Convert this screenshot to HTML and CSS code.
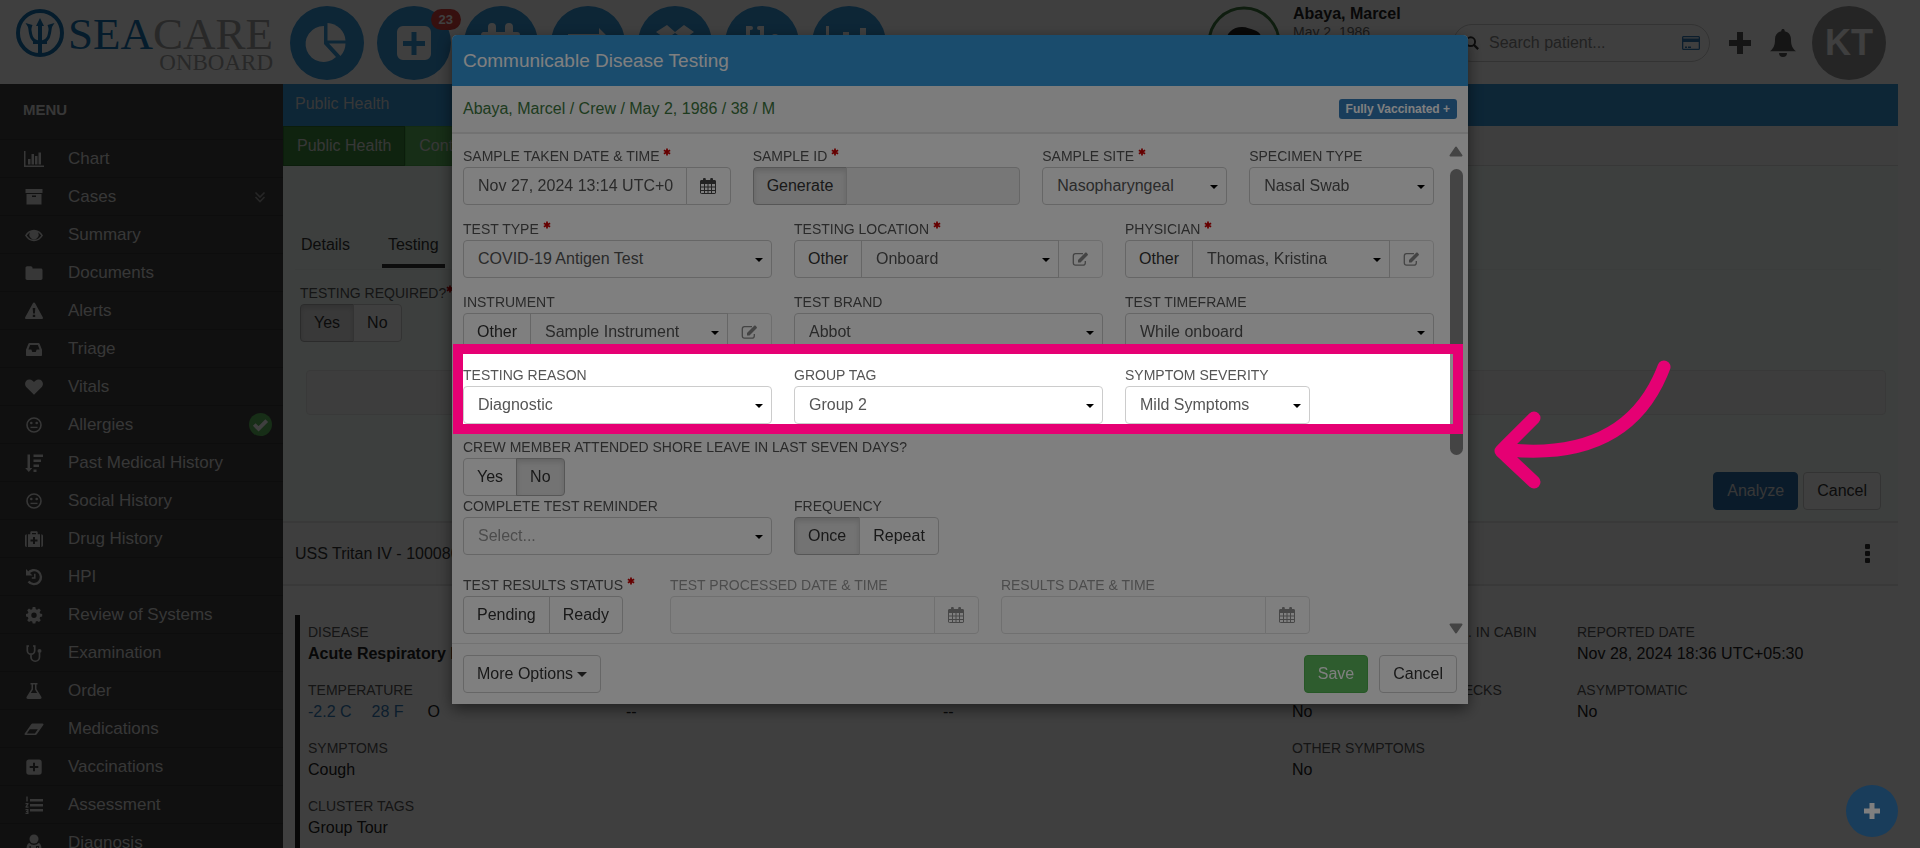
FILE: index.html
```html
<!DOCTYPE html>
<html lang="en">
<head>
  <meta charset="UTF-8">
  <meta name="viewport" content="width=device-width, initial-scale=1.0">
  <title>Communicable Disease Testing - SeaCare Onboard</title>
  <link rel="stylesheet" href="styles.css">
</head>
<body>

<!-- Icon set -->
<svg class="icon-defs" aria-hidden="true">
  <symbol id="i-chart" viewBox="0 0 20 20"><path d="M0 2h1.5v14.5H20V18H0zM4 10h2.500v5.500H4zM7.500 5H10v10.500H7.500zM11 7h2.500v8.500H11zM14.500 3.500H17v12h-2.500z"/></symbol>
  <symbol id="i-archive" viewBox="0 0 20 20"><path d="M1.500 2h17v4h-17z"/><path fill-rule="evenodd" d="M2.500 7h15v10.500h-15zM8 8.500v1.500h4V8.500z"/></symbol>
  <symbol id="i-eye" viewBox="0 0 20 20"><path fill-rule="evenodd" d="M1 10.500C3 7 6.300 4.800 10 4.800s7 2.200 9 5.700c-2 3.500-5.300 5.700-9 5.700s-7-2.200-9-5.700zm1.800 0c1.700 2.700 4.300 4.300 7.200 4.300s5.500-1.600 7.200-4.300c-.8-1.400-2-2.500-3.300-3.300a4.600 4.600 0 1 1-7.800 0c-1.300.8-2.500 1.900-3.300 3.300z"/></symbol>
  <symbol id="i-folder" viewBox="0 0 20 20"><path d="M1.500 5c0-1 .7-1.700 1.700-1.700h3.600c1 0 1.700.7 1.700 1.700v.6h8.300c1 0 1.700.7 1.700 1.700v8c0 1-.7 1.700-1.700 1.700H3.200c-1 0-1.700-.7-1.700-1.700z"/></symbol>
  <symbol id="i-warning" viewBox="0 0 20 20"><path fill-rule="evenodd" d="M10 1.500c.5 0 .9.300 1.100.7l7.700 14c.5.900-.1 1.800-1.100 1.800H2.300c-1 0-1.600-.9-1.100-1.800l7.700-14c.2-.4.600-.7 1.100-.7zM8.700 7l.4 5.500h1.800l.4-5.500zM8.800 13.700v2.200h2.400v-2.200z"/></symbol>
  <symbol id="i-inbox" viewBox="0 0 20 20"><path fill-rule="evenodd" d="M5.500 4h9c.5 0 .9.300 1.100.7l2.400 6V16c0 .6-.4 1-1 1H3c-.6 0-1-.4-1-1v-5.300l2.400-6c.2-.4.600-.7 1.100-.7zm.6 2L4.400 10.500h2.900l1 2.500h3.400l1-2.500h2.900L13.900 6z"/></symbol>
  <symbol id="i-heart" viewBox="0 0 20 20"><path d="M10 17.800L2.700 10.600C-.5 7.300 1.300 2.400 5.500 2.400c2.200 0 3.600 1.500 4.500 2.600.9-1.100 2.300-2.600 4.500-2.600 4.200 0 6 4.900 2.800 8.200z"/></symbol>
  <symbol id="i-meh" viewBox="0 0 20 20"><circle cx="10" cy="10" r="7" fill="none" stroke="currentColor" stroke-width="1.600"/><circle cx="7.300" cy="8" r="1.300"/><circle cx="12.700" cy="8" r="1.300"/><path d="M6.500 11.700h7v1.400h-7z"/></symbol>
  <symbol id="i-sort" viewBox="0 0 20 20"><path d="M3.500 1.500h2.500V15h2.300l-3.500 4-3.600-4h2.300zM9.500 1.500H19v2.500H9.500zM9.500 6.500h7.500V9H9.500zM9.500 11.500h5.500V14H9.500zM9.500 16.500h3V19h-3z"/></symbol>
  <symbol id="i-medkit" viewBox="0 0 20 20"><path fill-rule="evenodd" d="M1 7c0-1 .7-1.800 1.700-1.800V18C1.700 18 1 17.200 1 16.200zM19 7c0-1-.7-1.800-1.700-1.800V18c1 0 1.700-.8 1.700-1.800zM4 5.200h2.300V3.500c0-.8.600-1.300 1.300-1.300h4.800c.7 0 1.300.5 1.300 1.300v1.700H16V18H4zM8 4v1.200h4V4zM9 8v2.500H6.500v2H9V15h2v-2.500h2.500v-2H11V8z"/></symbol>
  <symbol id="i-history" viewBox="0 0 20 20"><path d="M4 6.500A7 7 0 1 1 4.500 14.500" fill="none" stroke="currentColor" stroke-width="2.400"/><path d="M2 2v6.500h6.500z"/><path d="M10.800 6.800v4.200H7.800" fill="none" stroke="currentColor" stroke-width="1.500"/></symbol>
  <symbol id="i-gear" viewBox="0 0 20 20"><path fill-rule="evenodd" d="M8.700 2h2.600l.5 2.200 1.300.5 1.900-1.200 1.800 1.800-1.200 1.900.5 1.300 2.100.5v2.600l-2.100.5-.5 1.300 1.200 1.900-1.800 1.800-1.900-1.200-1.300.5-.5 2.100H8.700l-.5-2.100-1.300-.5L5 17.100l-1.800-1.800 1.200-1.900-.5-1.300L2 11.600V9l1.900-.5.5-1.300-1.200-1.900L5 3.500l1.900 1.200 1.300-.5zM10 7.600a2.700 2.700 0 1 0 0 5.400 2.700 2.700 0 0 0 0-5.400z"/></symbol>
  <symbol id="i-steth" viewBox="0 0 20 20"><path d="M5 3H3.300v4.500a3.700 3.700 0 0 0 7.400 0V3H9M7 11.500V14a4 4 0 0 0 8.500 0v-4" fill="none" stroke="currentColor" stroke-width="1.700"/><circle cx="15.500" cy="8" r="2"/></symbol>
  <symbol id="i-flask" viewBox="0 0 20 20"><path fill-rule="evenodd" d="M6.500 2h7v1.500h-1V8l4.800 7.800c.7 1.200.1 2.200-1.300 2.200H4c-1.400 0-2-1-1.300-2.200L7.500 8V3.500h-1zM9 3.500v5L6.800 12h6.400L11 8.500v-5z"/></symbol>
  <symbol id="i-eraser" viewBox="0 0 20 20"><path fill-rule="evenodd" d="M8.500 4.500h10c.9 0 1.300.8.800 1.500l-6.500 9.300c-.3.400-.8.700-1.300.7h-10c-.9 0-1.300-.8-.8-1.500l6.500-9.300c.3-.4.800-.7 1.300-.7zM2.900 14.500h8l2.900-4.200h-8z"/></symbol>
  <symbol id="i-plus-square" viewBox="0 0 20 20"><path fill-rule="evenodd" d="M5 2.500h10a2.700 2.700 0 0 1 2.700 2.700v9.800a2.700 2.700 0 0 1-2.700 2.700H5A2.700 2.700 0 0 1 2.300 15V5.200A2.700 2.700 0 0 1 5 2.500zM9 5.800V9H5.700v2H9v3.300h2V11h3.300V9H11V5.800z"/></symbol>
  <symbol id="i-list" viewBox="0 0 20 20"><path d="M6 4h13v2.500H6zM6 9h13v2.500H6zM6 14h13v2.500H6zM2.300 1.500h1.400v5H2.300zM1.500 8h3v1.200L3 11.500h1.500v1.200h-3v-1.200L3 9.200H1.500zM1.500 14h3v5h-3v-1.200h1.700v-.8H2v-1h1.200v-.8H1.500z"/></symbol>
  <symbol id="i-doctor" viewBox="0 0 20 20"><circle cx="10" cy="6" r="4.500"/><path fill-rule="evenodd" d="M5.500 10c1 1.200 2.700 2 4.500 2s3.500-.8 4.500-2c2.200.5 3 3 3 6v3h-15v-3c0-3 .8-5.500 3-6zM5.500 13v3h1.300v-3zM12 13v4h1v-3h1v3h1v-4z"/></symbol>
  <symbol id="i-calendar" viewBox="0 0 16 16"><path fill-rule="evenodd" d="M1.500 2H3V1a1 1 0 0 1 1-1h.8a1 1 0 0 1 1 1v1h4.400V1a1 1 0 0 1 1-1h.8a1 1 0 0 1 1 1v1h1.500c.8 0 1.500.6 1.500 1.400v11.200c0 .8-.7 1.400-1.500 1.400h-12C.6 16 0 15.400 0 14.600V3.400C0 2.600.7 2 1.500 2zM1 6v2.500h3V6zM5 6v2.500h2.500V6zM8.500 6v2.500H11V6zM12 6v2.500h3V6zM1 9.500V12h3V9.500zM5 9.500V12h2.500V9.500zM8.500 9.500V12H11V9.500zM12 9.500V12h3V9.500zM1 13v2h3v-2zM5 13v2h2.500v-2zM8.500 13v2H11v-2zM12 13v2h3v-2z"/></symbol>
  <symbol id="i-edit" viewBox="0 0 16 14"><path d="M10.500 1.700H3A2.300 2.300 0 0 0 .8 4v7A2.300 2.300 0 0 0 3 13.200h7.500A2.300 2.300 0 0 0 12.800 11V9" fill="none" stroke="currentColor" stroke-width="1.300"/><path d="M5.500 10.500V8l7.200-7.200c.4-.4 1-.4 1.400 0l1.100 1.100c.4.400.4 1 0 1.400L8 10.500z"/></symbol>
  <symbol id="i-star" viewBox="0 0 10 10"><path d="M5 .5v9M1.100 2.700l7.800 4.600M8.900 2.700L1.100 7.300" stroke="currentColor" stroke-width="2.200" fill="none"/></symbol>
</svg>

<header class="topbar">
  <a class="logo" href="#" aria-label="SeaCare Onboard">
    <svg class="logo-mark" viewBox="0 0 48 48">
      <circle cx="24" cy="24" r="22" fill="none" stroke="currentColor" stroke-width="4"/>
      <path d="M24 14v32" fill="none" stroke="currentColor" stroke-width="4"/>
      <path d="M13.500 17c1 8 1 16 10.500 16s9.500-8 10.500-16" fill="none" stroke="currentColor" stroke-width="3"/>
      <path d="M24 9l4 8h-8zM9.500 14l7 2-2 6zM38.500 14l-7 2 2 6zM17 32h14v3H17z"/>
    </svg>
    <span class="logo-text">
      <span class="logo-name"><b>SEA</b>CARE</span>
      <span class="logo-sub">ONBOARD</span>
    </span>
  </a>
  <nav class="quick-nav">
    <a href="#" aria-label="Dashboard"><svg viewBox="0 0 74 74"><path d="M34 20v18l12 13a18 18 0 1 1-12-31z"/><path d="M37.500 17a19 19 0 0 1 18 17.500h-18z"/><path d="M39 37.500h16.500a19 19 0 0 1-5 12.500z"/></svg></a>
    <a href="#" aria-label="Patients"><svg viewBox="0 0 74 74"><path fill-rule="evenodd" d="M26 20h22a6 6 0 0 1 6 6v22a6 6 0 0 1-6 6H26a6 6 0 0 1-6-6V26a6 6 0 0 1 6-6zM34.500 26v9H26v5h8.500v9h5v-9H48v-5h-8.500v-9z"/></svg><span class="quick-badge">23</span></a>
    <a href="#" aria-label="Calendar"><svg viewBox="0 0 74 74"><path d="M19 26h5v-5a4 4 0 0 1 8 0v5h9v-5a4 4 0 0 1 8 0v5h4a3 3 0 0 1 3 3v26H17V29a3 3 0 0 1 2-3z"/></svg></a>
    <a href="#" aria-label="Transfer"><svg viewBox="0 0 74 74"><path d="M17 28h31v-6l9 9-9 9v-6H17z"/></svg></a>
    <a href="#" aria-label="Inventory"><svg viewBox="0 0 74 74"><path d="M29 19l8 7 9-7 10 7-10 7-9-6-9 6-10-7zM22 36l15 8 15-8v12l-15 8-15-8z"/></svg></a>
    <a href="#" aria-label="Examination"><svg viewBox="0 0 74 74"><path d="M26 22h-3v14a7 7 0 0 0 14 0V22h-3M30 44v4c0 10 20 10 20 0V36" fill="none" stroke="#fff" stroke-width="4" stroke-linecap="round"/><circle cx="50" cy="33" r="5"/></svg></a>
    <a href="#" aria-label="Reports"><svg viewBox="0 0 74 74"><path d="M14 20h3v33h42v3H14zM22 38h5v12h-5zM31 26h6v24h-6zM40 34h5v16h-5zM48 22h6v28h-6z"/></svg></a>
  </nav>
  <div class="patient">
    <svg class="patient-photo" viewBox="0 0 74 74"><circle cx="37" cy="37" r="35" fill="#eee" stroke="#3c763d" stroke-width="3"/><path d="M19 38c-1-11 7-17 16-17 5 0 8 2 12 3 7 2 9 8 8 16z" fill="#222"/></svg>
    <div class="patient-text">
      <strong>Abaya, Marcel</strong>
      <span>May 2, 1986</span>
    </div>
  </div>
  <div class="search">
    <svg class="search-icon" viewBox="0 0 16 16"><circle cx="6.500" cy="6.500" r="5" fill="none" stroke="currentColor" stroke-width="2.200"/><path d="M10 10l5 5" stroke="currentColor" stroke-width="2.600"/></svg>
    <input type="text" aria-label="Search patient" placeholder="Search patient...">
    <svg class="search-card" viewBox="0 0 18 14"><path fill-rule="evenodd" d="M1.500 0h15c.8 0 1.500.7 1.500 1.500v11c0 .8-.7 1.500-1.500 1.500h-15C.7 14 0 13.300 0 12.500v-11C0 .7.700 0 1.500 0zM1.300 1.300v1.200h15.400V1.300zM1.300 6v6.700h15.400V6zM3 10.500h2V12H3zM6 10.500h3V12H6z"/></svg>
  </div>
  <button class="icon-btn" aria-label="Add"><svg width="22" height="22" viewBox="0 0 22 22"><path d="M8 0h6v8h8v6h-8v8H8v-8H0V8h8z"/></svg></button>
  <button class="icon-btn" aria-label="Notifications"><svg width="26" height="28" viewBox="0 0 26 28"><path d="M13 0c1 0 1.700.7 1.700 1.700v.5c4 .8 6.300 4 6.300 8 0 6.500 1.500 9 5 12H0c3.500-3 5-5.500 5-12 0-4 2.300-7.200 6.300-8v-.5C11.300.700 12 0 13 0zM9 24h8a4 4 0 0 1-8 0z"/></svg></button>
  <button class="user-avatar">KT</button>
</header>

<div class="layout">
  <nav class="sidebar">
    <h2>MENU</h2>
    <ul>
      <li><a href="#"><svg><use href="#i-chart"/></svg>Chart</a></li>
      <li><a href="#"><svg><use href="#i-archive"/></svg>Cases</a><svg class="side-chevron" viewBox="0 0 12 12"><path d="M1.500 1.500L6 6l4.500-4.500M1.500 6L6 10.500 10.500 6" fill="none" stroke="currentColor" stroke-width="1.600"/></svg></li>
      <li><a href="#"><svg><use href="#i-eye"/></svg>Summary</a></li>
      <li><a href="#"><svg><use href="#i-folder"/></svg>Documents</a></li>
      <li><a href="#"><svg><use href="#i-warning"/></svg>Alerts</a></li>
      <li><a href="#"><svg><use href="#i-inbox"/></svg>Triage</a></li>
      <li><a href="#"><svg><use href="#i-heart"/></svg>Vitals</a></li>
      <li><a href="#"><svg><use href="#i-meh"/></svg>Allergies</a><svg class="side-check" viewBox="0 0 24 24"><circle cx="12" cy="12" r="12" fill="#5cb85c"/><path d="M5.500 12l4.500 4.500L18.500 8" fill="none" stroke="#fff" stroke-width="4"/></svg></li>
      <li><a href="#"><svg><use href="#i-sort"/></svg>Past Medical History</a></li>
      <li><a href="#"><svg><use href="#i-meh"/></svg>Social History</a></li>
      <li><a href="#"><svg><use href="#i-medkit"/></svg>Drug History</a></li>
      <li><a href="#"><svg><use href="#i-history"/></svg>HPI</a></li>
      <li><a href="#"><svg><use href="#i-gear"/></svg>Review of Systems</a></li>
      <li><a href="#"><svg><use href="#i-steth"/></svg>Examination</a></li>
      <li><a href="#"><svg><use href="#i-flask"/></svg>Order</a></li>
      <li><a href="#"><svg><use href="#i-eraser"/></svg>Medications</a></li>
      <li><a href="#"><svg><use href="#i-plus-square"/></svg>Vaccinations</a></li>
      <li><a href="#"><svg><use href="#i-list"/></svg>Assessment</a></li>
      <li><a href="#"><svg><use href="#i-doctor"/></svg>Diagnosis</a></li>
    </ul>
  </nav>

  <main class="content">
    <h1 class="page-title">Public Health</h1>
    <div class="section-tabs">
      <button class="active">Public Health</button>
      <button>Contact Tracing</button>
    </div>
    <section class="case-panel">
      <div class="case-tabs">
        <a href="#">Details</a>
        <a href="#" class="active">Testing</a>
      </div>
      <div class="case-required">
        <span class="label">TESTING REQUIRED?<svg class="req"><use href="#i-star"/></svg></span>
        <div class="btn-group">
          <button class="btn active">Yes</button>
          <button class="btn">No</button>
        </div>
      </div>
      <div class="case-box"></div>
      <div class="case-actions">
        <button class="btn btn-primary">Analyze</button>
        <button class="btn">Cancel</button>
      </div>
    </section>
    <div class="vessel-bar">
      <span>USS Tritan IV - 1000801</span>
      <button class="kebab" aria-label="More"><i></i><i></i><i></i></button>
    </div>
    <section class="case-summary">
      <dl>
        <div class="c1"><dt>DISEASE</dt><dd><strong>Acute Respiratory Illness</strong></dd></div>
        <div class="c4"><dt>CABIN NO. AND TOTAL NO. IN CABIN</dt><dd>--</dd></div>
        <div class="c5"><dt>REPORTED DATE</dt><dd>Nov 28, 2024 18:36 UTC+05:30</dd></div>
        <div class="c1"><dt>TEMPERATURE</dt><dd class="temps"><a href="#">-2.2 C</a><a href="#">28 F</a><span>O</span></dd></div>
        <div class="c2"><dt>PULSE</dt><dd>--</dd></div>
        <div class="c3"><dt>RESPIRATORY RATE</dt><dd>--</dd></div>
        <div class="c4"><dt>DAILY TEMPERATURE CHECKS</dt><dd>No</dd></div>
        <div class="c5"><dt>ASYMPTOMATIC</dt><dd>No</dd></div>
        <div class="c1"><dt>SYMPTOMS</dt><dd>Cough</dd></div>
        <div class="c4"><dt>OTHER SYMPTOMS</dt><dd>No</dd></div>
        <div class="c1"><dt>CLUSTER TAGS</dt><dd>Group Tour</dd></div>
      </dl>
    </section>
  </main>
</div>

<div class="backdrop"></div>
<button class="fab" aria-label="New"><svg width="18" height="18" viewBox="0 0 18 18"><path d="M6.500 1h5v5.500H17v5h-5.500V17h-5v-5.500H1v-5h5.500z"/></svg></button>

<div class="modal" role="dialog" aria-labelledby="modalTitle">
  <div class="modal-header"><h2 id="modalTitle">Communicable Disease Testing</h2></div>
  <div class="modal-patient">
    <span>Abaya, Marcel / Crew / May 2, 1986 / 38 / M</span>
    <button class="vax-badge">Fully Vaccinated +</button>
  </div>
  <div class="modal-body">
    <form class="test-form">
      <div class="row">
        <div class="field w7">
          <label for="taken">SAMPLE TAKEN DATE &amp; TIME <svg class="req"><use href="#i-star"/></svg></label>
          <div class="input-group">
            <input class="control" id="taken" type="text" value="Nov 27, 2024 13:14 UTC+05:30">
            <button type="button" class="addon" aria-label="Pick date"><svg class="cal"><use href="#i-calendar"/></svg></button>
          </div>
        </div>
        <div class="field w7">
          <label for="sampleId">SAMPLE ID <svg class="req"><use href="#i-star"/></svg></label>
          <div class="input-group">
            <button type="button" class="btn active">Generate</button>
            <input class="control" id="sampleId" type="text" disabled>
          </div>
        </div>
        <div class="field w5">
          <label for="site">SAMPLE SITE <svg class="req"><use href="#i-star"/></svg></label>
          <div class="select"><select class="control" id="site"><option>Nasopharyngeal</option></select></div>
        </div>
        <div class="field w5">
          <label for="specimen">SPECIMEN TYPE</label>
          <div class="select"><select class="control" id="specimen"><option>Nasal Swab</option></select></div>
        </div>
      </div>

      <div class="row">
        <div class="field w8">
          <label for="testType">TEST TYPE <svg class="req"><use href="#i-star"/></svg></label>
          <div class="select"><select class="control" id="testType"><option>COVID-19 Antigen Test</option></select></div>
        </div>
        <div class="field w8">
          <label for="location">TESTING LOCATION <svg class="req"><use href="#i-star"/></svg></label>
          <div class="input-group">
            <button type="button" class="btn">Other</button>
            <div class="select"><select class="control" id="location"><option>Onboard</option></select></div>
            <button type="button" class="addon muted" aria-label="Edit location"><svg class="edit"><use href="#i-edit"/></svg></button>
          </div>
        </div>
        <div class="field w8">
          <label for="physician">PHYSICIAN <svg class="req"><use href="#i-star"/></svg></label>
          <div class="input-group">
            <button type="button" class="btn">Other</button>
            <div class="select"><select class="control" id="physician"><option>Thomas, Kristina</option></select></div>
            <button type="button" class="addon muted" aria-label="Edit physician"><svg class="edit"><use href="#i-edit"/></svg></button>
          </div>
        </div>
      </div>

      <div class="row">
        <div class="field w8">
          <label for="instrument">INSTRUMENT</label>
          <div class="input-group">
            <button type="button" class="btn">Other</button>
            <div class="select"><select class="control" id="instrument"><option>Sample Instrument</option></select></div>
            <button type="button" class="addon muted" aria-label="Edit instrument"><svg class="edit"><use href="#i-edit"/></svg></button>
          </div>
        </div>
        <div class="field w8">
          <label for="brand">TEST BRAND</label>
          <div class="select"><select class="control" id="brand"><option>Abbot</option></select></div>
        </div>
        <div class="field w8">
          <label for="timeframe">TEST TIMEFRAME</label>
          <div class="select"><select class="control" id="timeframe"><option>While onboard</option></select></div>
        </div>
      </div>

      <div class="row row-tour">
        <div class="field w8">
          <label for="reason">TESTING REASON</label>
          <div class="select"><select class="control" id="reason"><option>Diagnostic</option></select></div>
        </div>
        <div class="field w8">
          <label for="groupTag">GROUP TAG</label>
          <div class="select"><select class="control" id="groupTag"><option>Group 2</option></select></div>
        </div>
        <div class="field w5">
          <label for="severity">SYMPTOM SEVERITY</label>
          <div class="select"><select class="control" id="severity"><option>Mild Symptoms</option></select></div>
        </div>
        <!-- Tour step: everything outside this frame is dimmed -->
        <div class="spotlight">
          <svg class="spotlight-arrow" viewBox="0 0 190 140">
            <path d="M177 17C152 83 97 107 22 100M47 68L14 101l33 31" fill="none" stroke="#e50073" stroke-width="13" stroke-linecap="round" stroke-linejoin="round"/>
          </svg>
        </div>
      </div>

      <div class="row row-tight">
        <div class="field w24">
          <span class="label">CREW MEMBER ATTENDED SHORE LEAVE IN LAST SEVEN DAYS?</span>
          <div class="btn-group">
            <button type="button" class="btn">Yes</button>
            <button type="button" class="btn active">No</button>
          </div>
        </div>
      </div>

      <div class="row row-wide">
        <div class="field w8">
          <label for="reminder">COMPLETE TEST REMINDER</label>
          <div class="select"><select class="control placeholder" id="reminder"><option>Select...</option></select></div>
        </div>
        <div class="field w8">
          <span class="label">FREQUENCY</span>
          <div class="btn-group">
            <button type="button" class="btn active">Once</button>
            <button type="button" class="btn">Repeat</button>
          </div>
        </div>
      </div>

      <div class="row row-tight">
        <div class="field w5">
          <span class="label">TEST RESULTS STATUS <svg class="req"><use href="#i-star"/></svg></span>
          <div class="btn-group">
            <button type="button" class="btn">Pending</button>
            <button type="button" class="btn">Ready</button>
          </div>
        </div>
        <div class="field w8 faded">
          <label for="processed">TEST PROCESSED DATE &amp; TIME</label>
          <div class="input-group">
            <input class="control" id="processed" type="text">
            <button type="button" class="addon" aria-label="Pick processed date"><svg class="cal"><use href="#i-calendar"/></svg></button>
          </div>
        </div>
        <div class="field w8 faded">
          <label for="results">RESULTS DATE &amp; TIME</label>
          <div class="input-group">
            <input class="control" id="results" type="text">
            <button type="button" class="addon" aria-label="Pick results date"><svg class="cal"><use href="#i-calendar"/></svg></button>
          </div>
        </div>
      </div>
    </form>
    <div class="scrollbar">
      <svg viewBox="0 0 14 11"><path d="M7 1.500L12.500 9.500h-11z" stroke="currentColor" stroke-width="2" stroke-linejoin="round"/></svg>
      <div class="scroll-track"><div class="scroll-thumb"></div></div>
      <svg viewBox="0 0 14 11"><path d="M7 9.500L1.500 1.500h11z" stroke="currentColor" stroke-width="2" stroke-linejoin="round"/></svg>
    </div>
  </div>
  <div class="modal-footer">
    <button class="btn">More Options <span class="caret"></span></button>
    <div class="modal-actions">
      <button class="btn btn-success">Save</button>
      <button class="btn">Cancel</button>
    </div>
  </div>
</div>

</body>
</html>
```
FILE: styles.css
```css
* {
  margin: 0;
  padding: 0;
  box-sizing: border-box;
}

body {
  font-family: "Liberation Sans", Arial, sans-serif;
  font-size: 16px;
  line-height: 22px;
  color: #333;
  background-color: #fff;
  height: 100vh;
  overflow: hidden;
}

button,
input,
select {
  font: inherit;
  color: inherit;
}

a {
  color: inherit;
  text-decoration: none;
}

svg {
  fill: currentColor;
}

.icon-defs {
  position: absolute;
  width: 0;
  height: 0;
}

/* Top bar */
.topbar {
  height: 84px;
  display: flex;
  align-items: center;
  padding: 1px 34px 0 16px;
}

.logo {
  display: flex;
  align-self: flex-start;
  align-items: flex-start;
  gap: 4px;
  width: 274px;
  padding-top: 8px;
  color: #1673b1;
}

.logo-mark {
  width: 48px;
  height: 48px;
}

.logo-text {
  display: flex;
  flex-direction: column;
  align-items: flex-end;
  padding-top: 4px;
  font-family: "Liberation Serif", "Times New Roman", serif;
  color: #a3a3a3;
}

.logo-name {
  font-size: 45px;
  line-height: 42px;
}

.logo-name b {
  font-weight: normal;
  color: #1673b1;
}

.logo-sub {
  font-size: 23px;
  line-height: 15px;
}

.quick-nav {
  display: flex;
  gap: 13px;
}

.quick-nav a {
  position: relative;
  width: 74px;
  height: 74px;
  border-radius: 50%;
  background-color: #3498db;
  color: #fff;
}

.quick-badge {
  position: absolute;
  top: 3px;
  right: -10px;
  padding: 0 8px;
  border-radius: 11px;
  background-color: #d9403c;
  font-size: 13px;
  font-weight: bold;
  line-height: 21px;
}

.patient {
  display: flex;
  gap: 12px;
  margin-left: auto;
  width: 246px;
}

.patient-photo {
  width: 74px;
  height: 74px;
}

.patient-text {
  display: flex;
  flex-direction: column;
  line-height: 16px;
  color: #222;
}

.patient-text span {
  font-size: 14px;
  line-height: 20px;
  color: #666;
}

.search {
  display: flex;
  align-items: center;
  width: 257px;
  height: 38px;
  padding: 0 9px 0 11px;
  border: 1px solid #ccc;
  border-radius: 19px;
}

.search input {
  flex: 1;
  min-width: 0;
  margin-left: 10px;
  border: none;
  background: none;
}

.search input::placeholder {
  color: #888;
}

.search-icon {
  width: 14px;
  height: 14px;
}

.search-card {
  width: 18px;
  height: 14px;
  color: #337ab7;
}

.icon-btn {
  display: flex;
  margin-left: 19px;
  border: none;
  background: none;
  color: #555;
}

.user-avatar {
  width: 74px;
  height: 74px;
  margin-left: 16px;
  border: none;
  border-radius: 50%;
  background-color: #969696;
  color: #fff;
  font-size: 36px;
  font-weight: bold;
}

/* Page layout */
.layout {
  display: flex;
  padding-right: 22px;
}

.sidebar {
  flex: 0 0 283px;
  background-color: #404040;
  color: #ddd;
}

.sidebar h2 {
  padding: 15px 23px 18px;
  font-size: 15px;
}

.sidebar ul {
  list-style: none;
  font-size: 17px;
}

.sidebar li {
  display: flex;
  align-items: center;
  justify-content: space-between;
  height: 38px;
  padding: 0 11px 0 24px;
  border-top: 1px solid #343434;
}

.sidebar a {
  display: flex;
  align-items: center;
  gap: 24px;
}

.sidebar a svg {
  width: 20px;
  height: 20px;
}

.side-chevron {
  width: 12px;
  height: 12px;
  margin-right: 6px;
  color: #999;
}

.side-check {
  width: 23px;
  height: 23px;
}

.content {
  flex: 1;
  min-width: 0;
}

.page-title {
  padding: 9px 12px 11px;
  background-color: #3498db;
  color: #ddd;
  font-size: 16px;
  font-weight: normal;
}

.section-tabs {
  display: flex;
  height: 40px;
  background-color: #f8f8f8;
  border-bottom: 1px solid #ddd;
}

.section-tabs button {
  height: 40px;
  padding: 0 13px;
  border: 1px solid #4cae4c;
  background-color: #5cb85c;
  color: #ddd;
}

.section-tabs .active {
  background-color: #3c8f3c;
  border-color: #2f772f;
}

.case-panel {
  padding: 60px 17px 11px 12px;
  background-color: #f5fffa;
}

.case-tabs {
  display: flex;
  gap: 26px;
  height: 44px;
  border-bottom: 1px solid #eef4f1;
}

.case-tabs a {
  height: 42px;
  padding: 8px 6px 0;
}

.case-tabs .active {
  border-bottom: 4px solid #333;
}

.case-required {
  padding: 13px 5px 0;
}

.label,
label {
  display: block;
  margin-bottom: 1px;
  font-size: 14px;
  line-height: 20px;
  color: #555;
  white-space: nowrap;
}

.req {
  width: 8px;
  height: 8px;
  color: #c00;
  vertical-align: 5px;
}

.case-box {
  height: 45px;
  margin: 28px -5px 57px 11px;
  border: 1px solid #e4e4e4;
  border-radius: 4px;
  background-color: #f5f5f5;
}

.case-actions {
  display: flex;
  justify-content: flex-end;
  gap: 5px;
}

.vessel-bar {
  display: flex;
  align-items: center;
  justify-content: space-between;
  height: 65px;
  padding: 0 28px 0 12px;
  border-top: 2px solid #e4e4e4;
  border-bottom: 2px solid #e4e4e4;
  background-color: #f8f8f8;
}

.kebab {
  display: flex;
  flex-direction: column;
  gap: 2px;
  border: none;
  background: none;
}

.kebab i {
  width: 5px;
  height: 5px;
  border-radius: 1px;
  background-color: #333;
}

.case-summary {
  margin: 29px 12px 0;
  padding: 6px 0 40px 8px;
  border-left: 5px solid #222;
}

.case-summary dl {
  display: grid;
  grid-template-columns: 318fr 317fr 349fr 285fr 309fr;
  row-gap: 14px;
  color: #222;
}

.case-summary dl > div {
  white-space: nowrap;
}

.case-summary dt {
  font-size: 14px;
  color: #555;
}

.case-summary .c1 { grid-column: 1; }
.case-summary .c2 { grid-column: 2; }
.case-summary .c3 { grid-column: 3; }
.case-summary .c4 { grid-column: 4; }
.case-summary .c5 { grid-column: 5; }

.temps {
  display: flex;
  gap: 20px;
}

.temps a {
  color: #337ab7;
}

.temps span {
  margin-left: 4px;
}

/* Buttons */
.btn {
  height: 38px;
  padding: 0 13px;
  border: 1px solid #ccc;
  border-radius: 4px;
  background-color: #fff;
  color: #333;
  white-space: nowrap;
}

.btn.active {
  background-color: #e6e6e6;
  border-color: #adadad;
  box-shadow: inset 0 3px 5px rgba(0, 0, 0, 0.125);
}

.btn-primary {
  background-color: #2a6da8;
  border-color: #2a6da8;
  color: #ddd;
}

.btn-success {
  background-color: #5cb85c;
  border-color: #4cae4c;
  color: #fff;
}

.btn-group {
  display: flex;
}

.btn-group .btn:first-child {
  border-radius: 4px 0 0 4px;
}

.btn-group .btn:last-child {
  margin-left: -1px;
  border-radius: 0 4px 4px 0;
}

.caret {
  display: inline-block;
  border: 5px solid transparent;
  border-top-color: #333;
  border-bottom: none;
  vertical-align: 2px;
}

/* Overlay */
.backdrop {
  position: fixed;
  inset: 0;
  background-color: rgba(0, 0, 0, 0.5);
}

.fab {
  position: fixed;
  right: 22px;
  bottom: 11px;
  display: flex;
  align-items: center;
  justify-content: center;
  width: 52px;
  height: 52px;
  border: none;
  border-radius: 50%;
  background-color: #337ab7;
  color: #fff;
}

.modal {
  position: fixed;
  top: 35px;
  left: 0;
  right: 0;
  z-index: 10;
  max-width: 1016px;
  margin: 0 auto;
  border-radius: 5px 5px 0 0;
  background-color: #fff;
  box-shadow: 0 5px 15px rgba(0, 0, 0, 0.5);
}

.modal-header {
  padding: 14px 11px;
  border-radius: 5px 5px 0 0;
  background-color: #3498db;
  color: #fff;
}

.modal-header h2 {
  font-size: 19px;
  line-height: 23px;
  font-weight: normal;
}

.modal-patient {
  display: flex;
  align-items: center;
  justify-content: space-between;
  height: 48px;
  padding: 0 11px;
  border-bottom: 2px solid #e5e5e5;
  background-color: #f8f8f8;
  color: #3c763d;
}

.vax-badge {
  padding: 0 7px;
  border: none;
  border-radius: 3px;
  background-color: #337ab7;
  color: #fff;
  font-size: 12px;
  font-weight: bold;
  line-height: 20px;
}

.modal-body {
  display: flex;
  gap: 15px;
  padding: 12px 5px 9px 11px;
}

.test-form {
  flex: 1;
  min-width: 0;
}

.row {
  position: relative;
  display: grid;
  grid-template-columns: repeat(24, minmax(0, 1fr));
  column-gap: 22px;
  margin-bottom: 14px;
}

.row-tour {
  margin-bottom: 13px;
}

.row-tight {
  margin-bottom: 0;
}

.row-wide {
  margin-bottom: 20px;
}

.w5 { grid-column: span 5; }
.w7 { grid-column: span 7; }
.w8 { grid-column: span 8; }
.w24 { grid-column: span 24; }

.control {
  display: block;
  width: 100%;
  height: 38px;
  padding: 0 14px;
  border: 1px solid #ccc;
  border-radius: 4px;
  background-color: #fff;
  color: #555;
  appearance: none;
}

.control:disabled {
  background-color: #eee;
}

.control.placeholder {
  color: #999;
}

.select {
  position: relative;
}

.select::after {
  content: "";
  position: absolute;
  top: 18px;
  right: 9px;
  border: 4px solid transparent;
  border-top-color: #000;
  border-bottom: none;
  pointer-events: none;
}

.input-group {
  display: flex;
}

.input-group > .control,
.input-group > .select {
  flex: 1;
  min-width: 0;
}

.input-group > .control {
  padding-right: 12px;
}

.input-group > :not(:first-child),
.input-group > .select:not(:first-child) > .control {
  border-top-left-radius: 0;
  border-bottom-left-radius: 0;
}

.input-group > :not(:last-child),
.input-group > .select:not(:last-child) > .control {
  border-top-right-radius: 0;
  border-bottom-right-radius: 0;
}

.input-group > :not(:first-child) {
  margin-left: -1px;
}

.addon {
  display: flex;
  align-items: center;
  justify-content: center;
  width: 45px;
  height: 38px;
  border: 1px solid #ccc;
  border-radius: 4px;
  background-color: #fff;
  color: #444;
}

.addon.muted {
  color: #888;
  border-color: #ddd;
}

.cal {
  width: 16px;
  height: 16px;
}

.edit {
  width: 17px;
  height: 14px;
}

.faded {
  opacity: 0.6;
}

.scrollbar {
  display: flex;
  flex-direction: column;
  width: 14px;
  color: #888;
}

.scrollbar svg {
  width: 14px;
  height: 11px;
}

.scroll-track {
  flex: 1;
  padding-top: 12px;
}

.scroll-thumb {
  width: 13px;
  height: 63%;
  margin-left: 1px;
  border-radius: 7px;
  background-color: #888;
}

.modal-footer {
  display: flex;
  justify-content: space-between;
  padding: 11px;
  border-top: 1px solid #e5e5e5;
}

.modal-actions {
  display: flex;
  gap: 11px;
}

/* Tour highlight */
.spotlight {
  position: absolute;
  top: -21px;
  right: -29px;
  bottom: -10px;
  left: -10px;
  z-index: 20;
  border: 10px solid #e50073;
  box-shadow: 0 0 0 2000px rgba(0, 0, 0, 0.5);
  pointer-events: none;
}

.spotlight-arrow {
  position: absolute;
  top: -4px;
  left: 100%;
  width: 190px;
  height: 140px;
  margin-left: 34px;
}
```
